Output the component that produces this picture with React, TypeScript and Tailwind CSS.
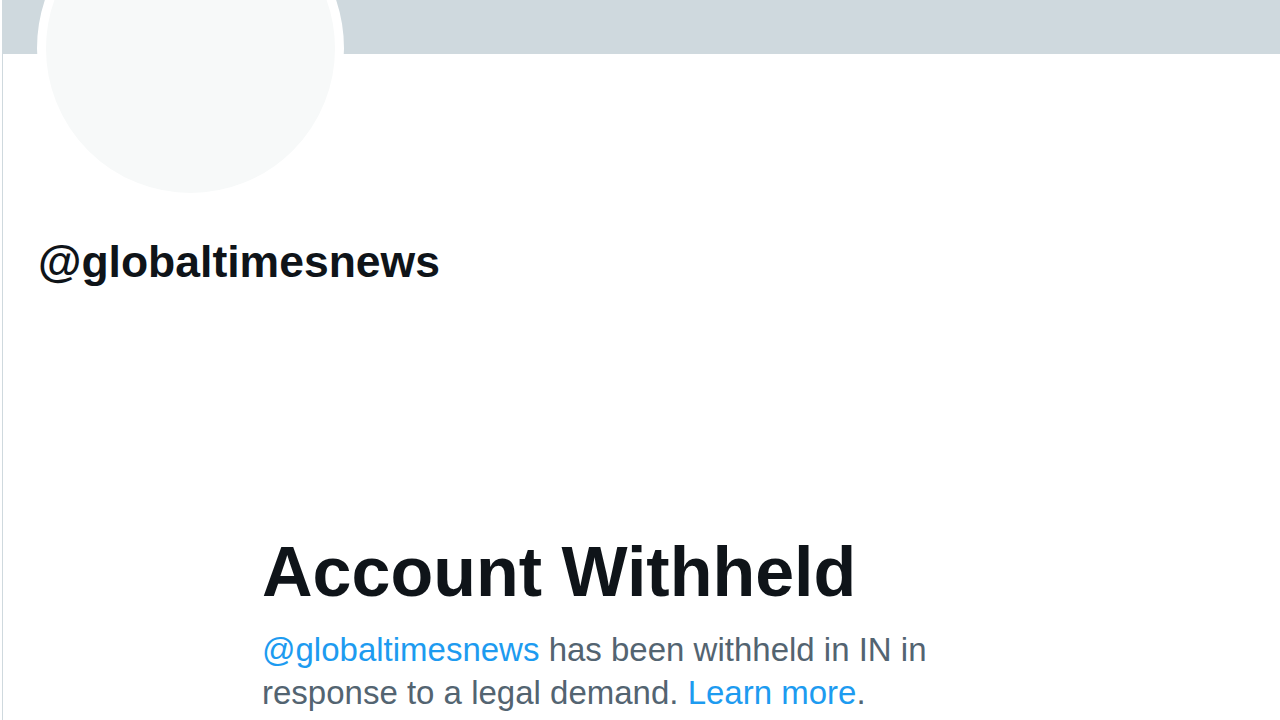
import React from 'react';

const App = () => {
  return (
    <div className="w-[1280px] h-[720px] overflow-hidden bg-white" style={{ fontFamily: '"Liberation Sans", Arial, sans-serif' }}>
      <div className="relative ml-[2px] h-full border-l border-[#cfd9de]">
        {/* Banner */}
        <div className="h-[54px] bg-[#cfd9de]"></div>

        {/* Avatar */}
        <div className="absolute left-[34px] top-[-105px] w-[307px] h-[307px] rounded-full border-[9px] border-white bg-[#f7f9f9]"></div>

        {/* Handle */}
        <div className="pl-[35px] pt-[182px]">
          <h2 className="text-[44.5px] leading-[52px] font-bold text-[#0f1419]">@globaltimesnews</h2>
        </div>

        {/* Withheld notice */}
        <div className="pl-[259px] pt-[244px]">
          <h1 className="text-[70px] leading-[80px] font-bold text-[#0f1419]">Account Withheld</h1>
          <p className="mt-[16px] w-[700px] text-[33px] leading-[43px] text-[#536471]">
            <span className="text-[#1d9bf0]">@globaltimesnews</span> has been withheld in IN in response to a legal demand.{' '}
            <span className="text-[#1d9bf0]">Learn more</span>.
          </p>
        </div>
      </div>
    </div>
  );
};

export default App;
